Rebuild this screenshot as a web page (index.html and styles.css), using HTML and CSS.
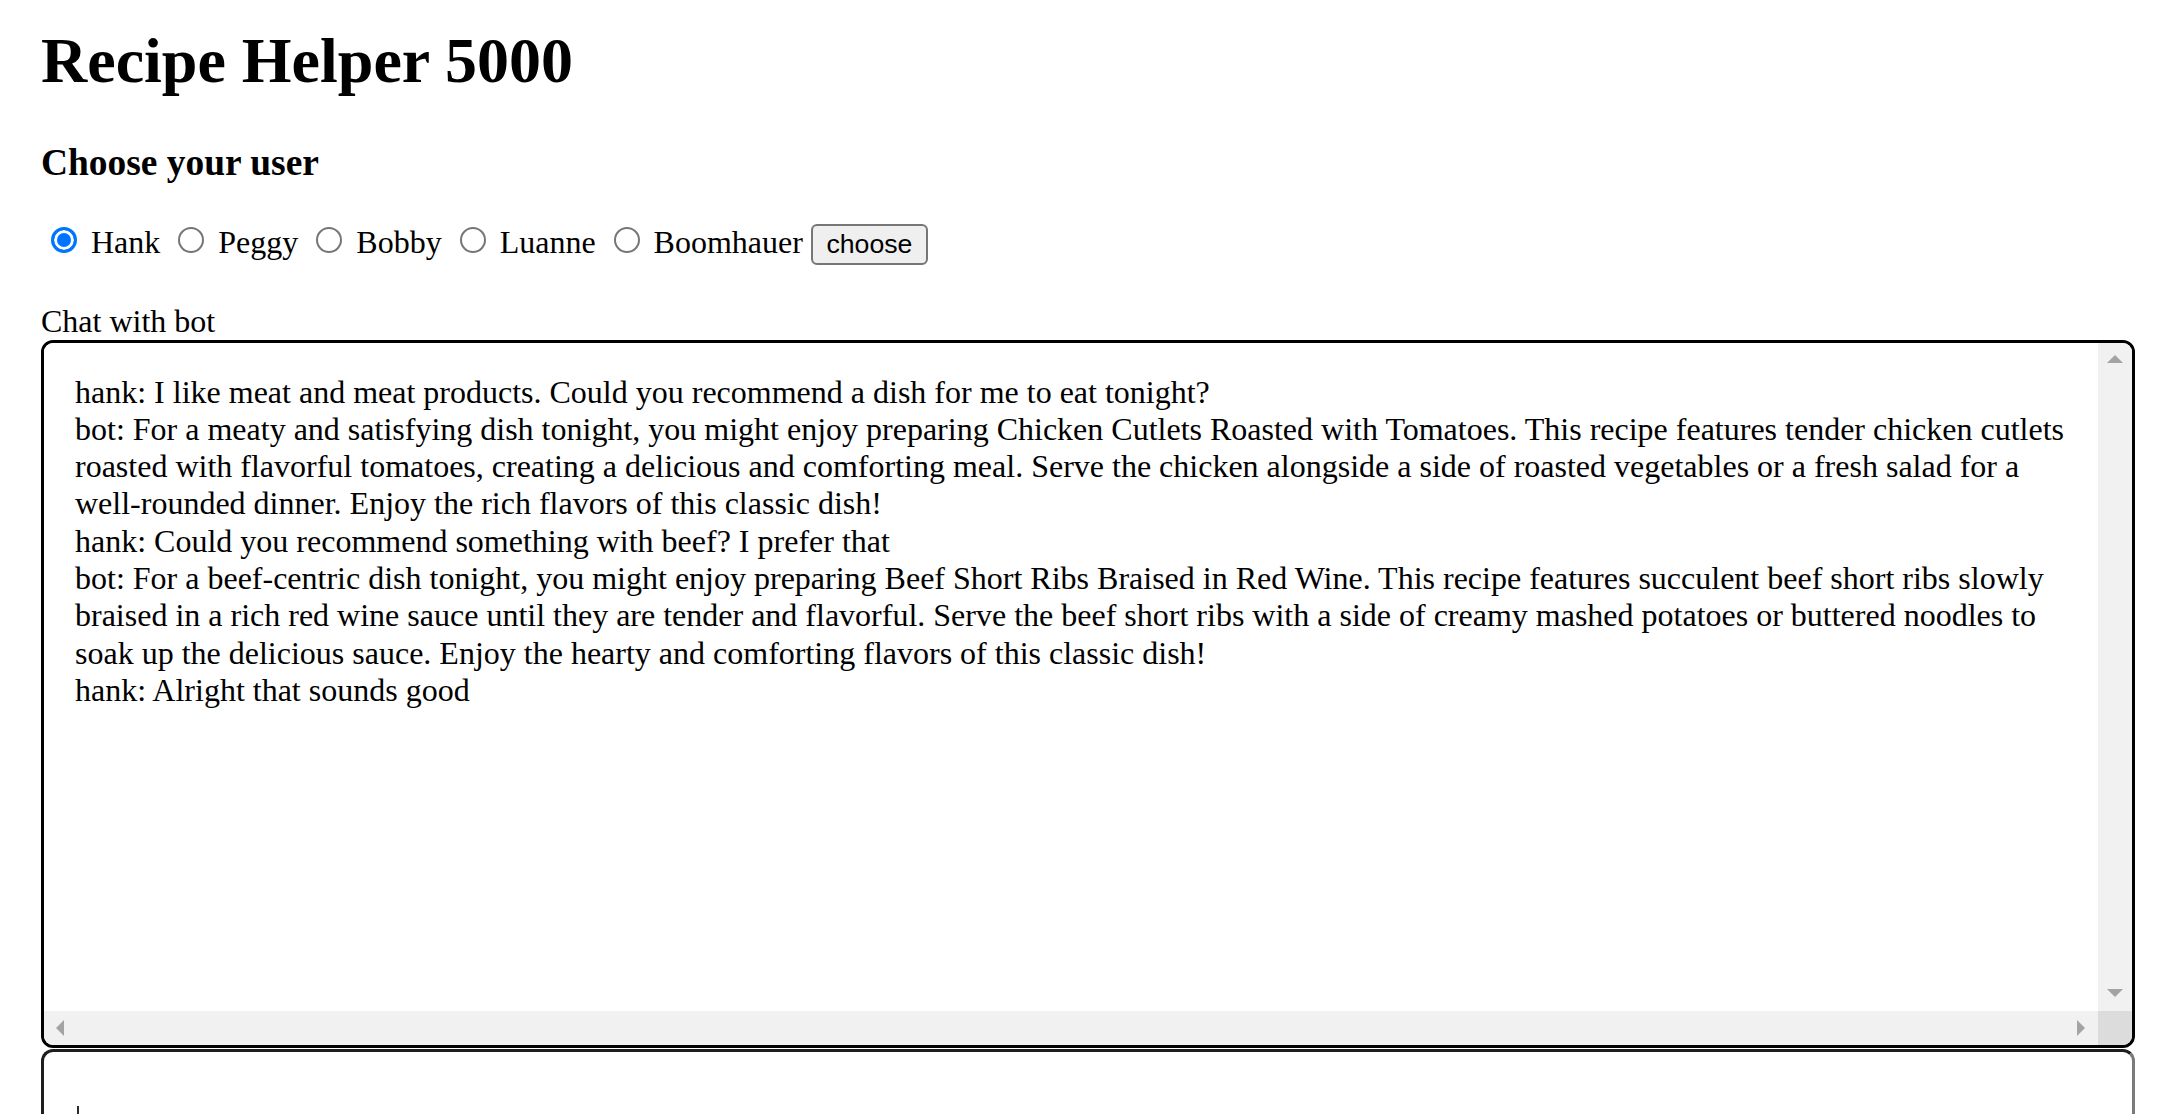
FILE: index.html
```html
<!DOCTYPE html>
<html lang="en">
<head>
<meta charset="utf-8">
<title>Recipe Helper 5000</title>
<link rel="stylesheet" href="styles.css">
</head>
<body>
<main class="page">
  <h1 class="title">Recipe Helper 5000</h1>
  <h3 class="subtitle">Choose your user</h3>
  <form class="users">
    <input type="radio" class="radio" id="u-hank" name="user" value="hank" checked> <label for="u-hank">Hank</label>
    <input type="radio" class="radio" id="u-peggy" name="user" value="peggy"> <label for="u-peggy">Peggy</label>
    <input type="radio" class="radio" id="u-bobby" name="user" value="bobby"> <label for="u-bobby">Bobby</label>
    <input type="radio" class="radio" id="u-luanne" name="user" value="luanne"> <label for="u-luanne">Luanne</label>
    <input type="radio" class="radio" id="u-boomhauer" name="user" value="boomhauer"> <label for="u-boomhauer">Boomhauer</label>
    <button type="button" class="choose">choose</button>
  </form>
  <label class="chat-label" for="chat">Chat with bot</label>
  <div class="chat-box">
    <textarea class="chat" id="chat" readonly>hank: I like meat and meat products. Could you recommend a dish for me to eat tonight?
bot: For a meaty and satisfying dish tonight, you might enjoy preparing Chicken Cutlets Roasted with Tomatoes. This recipe features tender chicken cutlets roasted with flavorful tomatoes, creating a delicious and comforting meal. Serve the chicken alongside a side of roasted vegetables or a fresh salad for a well-rounded dinner. Enjoy the rich flavors of this classic dish!
hank: Could you recommend something with beef? I prefer that
bot: For a beef-centric dish tonight, you might enjoy preparing Beef Short Ribs Braised in Red Wine. This recipe features succulent beef short ribs slowly braised in a rich red wine sauce until they are tender and flavorful. Serve the beef short ribs with a side of creamy mashed potatoes or buttered noodles to soak up the delicious sauce. Enjoy the hearty and comforting flavors of this classic dish!
hank: Alright that sounds good</textarea>
    <div class="vbar" aria-hidden="true">
      <span class="sb-btn"><span class="arrow arrow-up"></span></span>
      <span class="sb-btn"><span class="arrow arrow-down"></span></span>
    </div>
    <div class="hbar" aria-hidden="true">
      <span class="sb-btn"><span class="arrow arrow-left"></span></span>
      <span class="sb-btn"><span class="arrow arrow-right"></span></span>
    </div>
    <div class="sb-corner" aria-hidden="true"></div>
  </div>
  <div class="input-wrap">
    <textarea class="message" aria-label="Message"></textarea>
    <span class="caret"></span>
  </div>
</main>
</body>
</html>
```
FILE: styles.css
```css
html {
  overflow: hidden;
}

body {
  margin: 0;
  background: #fff;
  color: #000;
  font-family: "Liberation Serif", "Times New Roman", serif;
  font-size: 32px;
}

.page {
  padding: 24px 30px 0 41px;
}

.title {
  margin: 0 0 43px;
  font-size: 64px;
  font-weight: bold;
  line-height: normal;
}

.subtitle {
  margin: 0 0 37px;
  font-size: 37.44px;
  font-weight: bold;
  line-height: normal;
}

.users {
  margin: 0 0 37.5px;
}

.radio {
  -webkit-appearance: none;
  appearance: none;
  box-sizing: border-box;
  width: 26px;
  height: 26px;
  margin: 6px 6px 0 10px;
  border: 2px solid #767676;
  border-radius: 50%;
  background: #fff;
}

.radio:checked {
  border: 3px solid #0075ff;
  background: #0075ff;
  box-shadow: inset 0 0 0 3px #fff;
}

.choose {
  box-sizing: border-box;
  height: 41px;
  margin: 0;
  padding: 0 13.5px;
  border: 2px solid #767676;
  border-radius: 6px;
  background: #efefef;
  color: #000;
  font-family: "Liberation Sans", Arial, sans-serif;
  font-size: 26.67px;
}

.chat-label {
  display: block;
  margin-bottom: 0;
}

.chat-box {
  display: grid;
  grid-template-columns: 1fr 34px;
  grid-template-rows: 1fr 34px;
  box-sizing: border-box;
  width: 2094px;
  height: 708px;
  border: 3px solid #000;
  border-radius: 12px;
  overflow: hidden;
  background: #fff;
}

.chat {
  display: block;
  box-sizing: border-box;
  width: 100%;
  height: 100%;
  margin: 0;
  padding: 31px 18px 0 31px;
  border: 0;
  background: #fff;
  color: #000;
  font-family: "Liberation Serif", "Times New Roman", serif;
  font-size: 32px;
  line-height: 37.3px;
  overflow: hidden;
  resize: none;
  outline: none;
}

.vbar,
.hbar {
  display: flex;
  justify-content: space-between;
  background: #f1f1f1;
}

.vbar {
  flex-direction: column;
}

.sb-btn {
  display: flex;
  align-items: center;
  justify-content: center;
  width: 34px;
  height: 34px;
}

.arrow {
  width: 0;
  height: 0;
  border: 0 solid transparent;
}

.arrow-up {
  border-width: 0 8px 8px;
  border-bottom-color: #a3a3a3;
  margin-top: -2px;
}

.arrow-down {
  border-width: 8px 8px 0;
  border-top-color: #a3a3a3;
  margin-top: -1px;
}

.arrow-left {
  border-width: 8px 8px 8px 0;
  border-right-color: #a3a3a3;
  margin-left: -3px;
}

.arrow-right {
  border-width: 8px 0 8px 8px;
  border-left-color: #a3a3a3;
}

.sb-corner {
  background: #dcdcdc;
}

.input-wrap {
  position: relative;
  margin-top: 1px;
}

.message {
  display: block;
  box-sizing: border-box;
  width: 2094px;
  height: 240px;
  margin: 0;
  padding: 27px 13px 0 31px;
  border: 3px solid #1e1e1e;
  border-right-color: #7a7a7a;
  border-radius: 12px;
  background: #fff;
  color: #000;
  font-family: "Liberation Serif", "Times New Roman", serif;
  font-size: 32px;
  line-height: 37.3px;
  resize: none;
  outline: none;
}

.caret {
  position: absolute;
  left: 36px;
  top: 57px;
  width: 2px;
  height: 30px;
  background: #2a2a2a;
}
```
